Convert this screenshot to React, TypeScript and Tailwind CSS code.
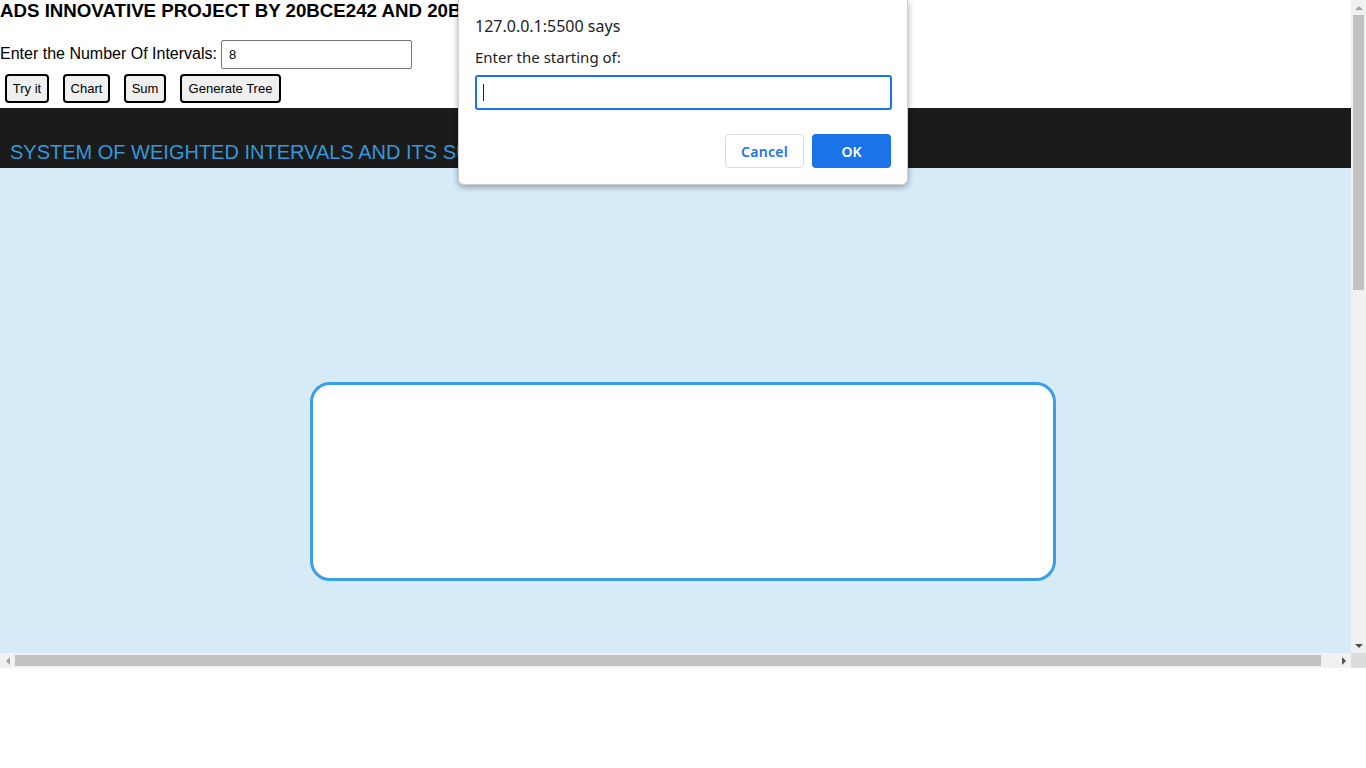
import React from 'react';

const buttons = [
  { label: 'Try it', w: 'w-[44px]' },
  { label: 'Chart', w: 'w-[47px]' },
  { label: 'Sum', w: 'w-[42px]' },
  { label: 'Generate Tree', w: 'w-[101px]' },
];

const PromptDialog = () => (
  <div className="absolute left-[458px] top-0 w-[450px] h-[185px] bg-white rounded-b-[6px] shadow-[0_2px_6px_rgba(0,0,0,0.35)] border border-[#cfcfcf] border-t-0 px-4 pt-[15px] font-['Noto_Sans',sans-serif] text-[#202124]">
    <div className="text-[16px] leading-[22px]">127.0.0.1:5500 says</div>
    <div className="text-[15px] leading-[20px] mt-[10px]">Enter the starting of:</div>
    <div className="mt-[8px] h-[35px] w-[417px] border-2 border-[#1a73e8] rounded-[3px] flex items-center pl-[6px]">
      <div className="w-px h-[17px] bg-[#202124]"></div>
    </div>
    <div className="flex justify-end gap-2 mt-[24px]">
      <button className="w-[79px] h-[34px] rounded-[4px] border border-[#dadce0] bg-white text-[#1a73e8] text-[14px] font-semibold tracking-[0.3px]">Cancel</button>
      <button className="w-[79px] h-[34px] rounded-[4px] bg-[#1a73e8] text-white text-[14px] font-semibold">OK</button>
    </div>
  </div>
);

const App = () => {
  return (
    <div className="relative w-[1366px] h-[768px] bg-white overflow-hidden font-['Liberation_Sans',Arial,sans-serif] text-black">
      <div className="flex flex-col h-[668px]">
        <div className="flex flex-1 min-h-0">
          {/* page content */}
          <div className="w-[1351px] overflow-hidden">
            <div className="w-[1366px] flex flex-col h-[653px]">
              <h3 className="text-[18.7px] font-bold leading-[22px]">ADS INNOVATIVE PROJECT BY 20BCE242 AND 20BCE245</h3>
              <div className="flex items-center mt-[18px] text-[16px]">
                <span className="-mt-[2px]">Enter the Number Of Intervals:</span>
                <div className="ml-[4px] w-[191px] h-[29px] border border-[#767676] rounded-[2px] flex items-center px-[7px] text-[13px]">8</div>
              </div>
              <div className="flex gap-[14px] pl-[5px] mt-[5px] text-[13px]">
                {buttons.map((b) => (
                  <button key={b.label} className={`${b.w} h-[29px] border-2 border-black rounded-[4px] bg-[#efefef] whitespace-nowrap`}>{b.label}</button>
                ))}
              </div>
              <div className="mt-[5px] h-[60px] bg-[#1b1b1b] flex items-end pl-[10px] pb-[4px]">
                <span className="text-[20px] text-[#3498db] leading-[23px]">SYSTEM OF WEIGHTED INTERVALS AND ITS SUM</span>
              </div>
              <div className="flex-1 bg-[#d6eaf8] flex justify-center pt-[214px]">
                <div className="w-[746px] h-[199px] bg-white border-[3px] border-[#3a9fe8] rounded-[20px]"></div>
              </div>
            </div>
          </div>
          {/* vertical scrollbar */}
          <div className="w-[15px] bg-[#f1f1f1] flex flex-col items-center">
            <div className="h-[15px] flex items-center justify-center">
              <div className="w-0 h-0 border-l-[4px] border-r-[4px] border-b-[4px] border-l-transparent border-r-transparent border-b-[#a3a3a3]"></div>
            </div>
            <div className="w-[11px] h-[275px] bg-[#c1c1c1]"></div>
            <div className="flex-1"></div>
            <div className="h-[15px] flex items-center justify-center">
              <div className="w-0 h-0 border-l-[4px] border-r-[4px] border-t-[4px] border-l-transparent border-r-transparent border-t-[#505050]"></div>
            </div>
          </div>
        </div>
        {/* horizontal scrollbar */}
        <div className="h-[15px] flex">
          <div className="w-[1351px] bg-[#f1f1f1] flex items-center">
            <div className="w-[15px] flex items-center justify-center">
              <div className="w-0 h-0 border-t-[4px] border-b-[4px] border-r-[4px] border-t-transparent border-b-transparent border-r-[#a3a3a3]"></div>
            </div>
            <div className="w-[1306px] h-[11px] bg-[#c1c1c1]"></div>
            <div className="flex-1"></div>
            <div className="w-[15px] flex items-center justify-center">
              <div className="w-0 h-0 border-t-[4px] border-b-[4px] border-l-[4px] border-t-transparent border-b-transparent border-l-[#505050]"></div>
            </div>
          </div>
          <div className="w-[15px] bg-[#dcdcdc]"></div>
        </div>
      </div>
      <PromptDialog />
    </div>
  );
};

export default App;
